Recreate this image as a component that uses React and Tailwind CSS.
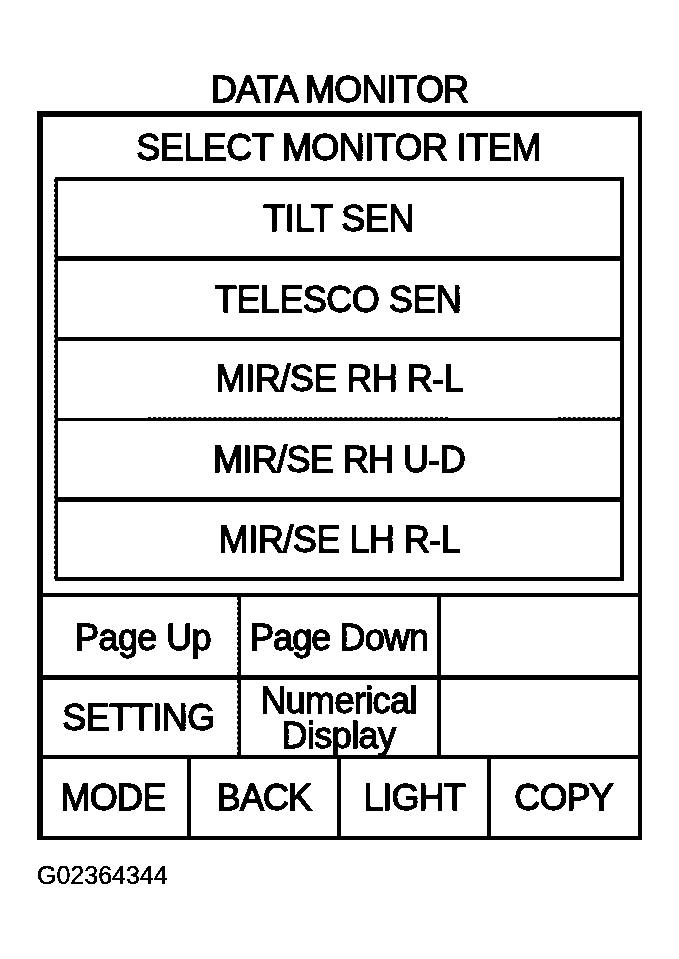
import React from 'react';

const items = [
  { label: 'TILT SEN', row: 'h-[80px] border-b-[5px]', text: 'tracking-[-0.5px] pr-[1px]' },
  { label: 'TELESCO SEN', row: 'h-[80px] border-b-[4px]', text: 'tracking-[-0.5px] pr-[2px]' },
  { label: 'MIR/SE RH R-L', row: 'h-[80px] border-b-[3px] pb-[2px]', text: 'tracking-[-0.5px] pl-[1px]' },
  { label: 'MIR/SE RH U-D', row: 'h-[81px] border-b-[5px]', text: 'tracking-[-0.6px]' },
  { label: 'MIR/SE LH R-L', row: 'h-[75px]', text: 'tracking-[-0.5px] pl-[1px]' },
];

const modes = [
  { label: 'MODE', cell: 'w-[148px] border-r-[4px]', text: 'tracking-[-0.8px] pr-[4px]' },
  { label: 'BACK', cell: 'w-[150px] border-r-[4px]', text: 'tracking-[-0.9px]' },
  { label: 'LIGHT', cell: 'w-[150px] border-r-[4px]', text: 'tracking-[-0.9px]' },
  { label: 'COPY', cell: 'w-[147px]', text: 'tracking-[-0.9px] pr-[2px]' },
];

// Hard edged text, like a bitmap print
const Label = ({ children, className = '', leading = 'leading-[40px]' }) => (
  <span className={`block whitespace-nowrap pt-px text-center text-[36px] [-webkit-text-stroke:1.4px_black] [filter:url(#ink)] ${leading} ${className}`}>
    {children}
  </span>
);

const Cell = ({ children, className = '' }) => (
  <div className={`flex items-center justify-center border-black ${className}`}>{children}</div>
);

// Ragged outer edge of a cell's right border
const RaggedEdge = () => (
  <div className="absolute right-0 top-0 h-full border-l border-dashed border-black" />
);

export default function App() {
  return (
    <div className="h-[959px] w-[679px] overflow-hidden bg-white pl-[37px] pt-[69px] font-['Liberation_Sans',Arial,sans-serif] text-black">
      <svg className="absolute h-0 w-0" aria-hidden="true">
        <filter id="ink" colorInterpolationFilters="sRGB">
          <feComponentTransfer>
            <feFuncA type="discrete" tableValues="0 1" />
          </feComponentTransfer>
        </filter>
      </svg>

      <div className="flex h-[42px] w-[605px] justify-center">
        <Label className="tracking-[-0.9px]">DATA MONITOR</Label>
      </div>

      <div className="h-[729px] w-[605px] border-b-[4px] border-l-[6px] border-r-[4px] border-t-[6px] border-black">
        <div className="h-[480px] border-b-[4px] border-black">
          <div className="flex h-[60px] justify-center pt-[10px]">
            <Label className="pr-[4px] tracking-[-0.55px]">SELECT MONITOR ITEM</Label>
          </div>
          <div className="relative ml-[12px] h-[404px] w-[569px] border-y-[4px] border-l-[3px] border-r-[4px] border-black">
            <div className="absolute -left-[4px] -top-[2px] h-[400px] border-l border-dashed border-black" />
            {items.map((item) => (
              <Cell key={item.label} className={item.row}>
                <Label className={item.text}>{item.label}</Label>
              </Cell>
            ))}
            <div className="absolute left-[90px] top-[236px] w-[300px] border-t border-dashed border-black" />
            <div className="absolute right-0 top-[236px] w-[62px] border-t border-dashed border-black" />
          </div>
        </div>

        <div className="flex h-[83px] border-b-[5px] border-black">
          <Cell className="relative w-[198px] border-r-[3px] pt-[2px]">
            <Label className="pl-[5px] tracking-[-0.6px]">Page Up</Label>
            <RaggedEdge />
          </Cell>
          <Cell className="w-[200px] border-r-[4px] pt-[2px]">
            <Label className="tracking-[-0.9px]">Page Down</Label>
          </Cell>
        </div>

        <div className="flex h-[79px] border-b-[4px] border-black">
          <Cell className="relative w-[198px] border-r-[3px]">
            <Label className="pr-[4px] tracking-[-0.5px]">SETTING</Label>
            <RaggedEdge />
          </Cell>
          <Cell className="w-[200px] border-r-[4px]">
            <Label leading="leading-[35px]" className="pr-[1px] tracking-[-0.6px]">
              Numerical
              <br />
              Display
            </Label>
          </Cell>
        </div>

        <div className="flex h-[77px]">
          {modes.map((mode) => (
            <Cell key={mode.label} className={`pb-[1px] ${mode.cell}`}>
              <Label className={mode.text}>{mode.label}</Label>
            </Cell>
          ))}
        </div>
      </div>

      <div className="mt-[20px] text-[25px] leading-[30px] [-webkit-text-stroke:0.4px_black] [filter:url(#ink)]">G02364344</div>
    </div>
  );
}
